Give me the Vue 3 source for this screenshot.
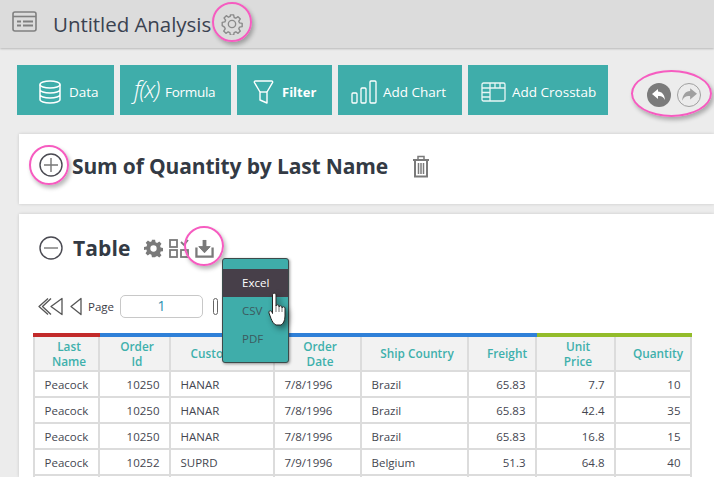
<script setup>
const buttons = [
  { label: 'Data', icon: 'data' },
  { label: 'Formula', icon: 'fx' },
  { label: 'Filter', icon: 'filter', bold: true },
  { label: 'Add Chart', icon: 'chart' },
  { label: 'Add Crosstab', icon: 'cross' }
]
const columns = [
  { label: ['Last', 'Name'], w: 65, color: '#c22a2a', cls: 'l', head: '' },
  { label: ['Order', 'Id'], w: 71, color: '#2f80d8', cls: 'r', head: '' },
  { label: ['CustomerID'], w: 104, color: '#2f80d8', cls: 'l', head: '' },
  { label: ['Order', 'Date'], w: 87, color: '#2f80d8', cls: 'l', head: '' },
  { label: ['Ship Country'], w: 107, color: '#2f80d8', cls: 'l', head: '' },
  { label: ['Freight'], w: 68, color: '#2f80d8', cls: 'r', head: 'wide' },
  { label: ['Unit', 'Price'], w: 79, color: '#93bc2a', cls: 'r', head: '' },
  { label: ['Quantity'], w: 76, color: '#93bc2a', cls: 'r', head: 'wide' }
]
const rows = [
  ['Peacock', '10250', 'HANAR', '7/8/1996', 'Brazil', '65.83', '7.7', '10'],
  ['Peacock', '10250', 'HANAR', '7/8/1996', 'Brazil', '65.83', '42.4', '35'],
  ['Peacock', '10250', 'HANAR', '7/8/1996', 'Brazil', '65.83', '16.8', '15'],
  ['Peacock', '10252', 'SUPRD', '7/9/1996', 'Belgium', '51.3', '64.8', '40'],
  ['', '', '', '', '', '', '', '']
]
</script>

<template>
  <div class="page">
    <header class="top">
      <svg class="logo" width="26" height="21" viewBox="0 0 26 21" fill="none" stroke="#808080" stroke-width="1.6">
        <rect x="1" y="1" width="23" height="19" rx="2" />
        <path d="M1 5.5h23" />
        <path d="M5 10.5h4M11 10.5h10M5 14.5h4M11 14.5h10" stroke-width="2" />
      </svg>
      <h1 class="name">Untitled Analysis</h1>
      <svg class="cog" width="22" height="22" viewBox="0 0 24 24" fill="none" stroke="#8a8a8a" stroke-width="1.5">
        <path d="M10.2 2h3.6l.5 2.9 1.9.8 2.4-1.7 2.5 2.5-1.7 2.4.8 1.900 2.900.5v3.600l-2.900.5-.8 1.900 1.700 2.400-2.500 2.500-2.400-1.700-1.900.8-.5 2.900h-3.600l-.5-2.900-1.900-.8-2.400 1.700-2.500-2.500 1.700-2.400-.8-1.900L1.300 13.800v-3.600l2.900-.5.8-1.900L3.300 5.400l2.500-2.500 2.400 1.700 1.900-.8z" stroke-linejoin="round" />
        <circle cx="12" cy="12" r="4" />
      </svg>
      <span class="ring ring-cog"></span>
    </header>

    <section class="tools">
      <button v-for="b in buttons" :key="b.label" class="tool" :class="'t-' + b.icon">
        <svg v-if="b.icon === 'data'" width="22" height="24" viewBox="0 0 22 24" fill="none" stroke="#fff" stroke-width="1.5">
          <ellipse cx="11" cy="4.500" rx="10" ry="3.500" />
          <path d="M1 4.500v15c0 2 4.500 3.500 10 3.500s10-1.500 10-3.500v-15M1 9.500c0 2 4.500 3.500 10 3.500s10-1.500 10-3.500M1 14.500c0 2 4.500 3.500 10 3.500s10-1.500 10-3.500" />
        </svg>
        <span v-else-if="b.icon === 'fx'" class="fx">f(x)</span>
        <svg v-else-if="b.icon === 'filter'" width="21" height="24" viewBox="0 0 21 24" fill="none" stroke="#fff" stroke-width="1.4">
          <path d="M2.500 1h16c1 0 1.500.8 1 1.700L14 12v11l-7-3v-8L1.500 2.700C1 1.800 1.500 1 2.500 1z" stroke-linejoin="round" />
          <path d="M7 12h7" />
        </svg>
        <svg v-else-if="b.icon === 'chart'" width="26" height="24" viewBox="0 0 26 24" fill="none" stroke="#fff" stroke-width="1.3">
          <rect x="1" y="13" width="5" height="10" rx="1" />
          <rect x="10" y="8" width="5" height="15" rx="1" />
          <rect x="19" y="1" width="6" height="22" rx="1" />
        </svg>
        <svg v-else width="25" height="20" viewBox="0 0 25 20" fill="none" stroke="#e8f6f5" stroke-width="1.3">
          <rect x="1" y="1" width="23" height="18" rx="1.500" />
          <path d="M1 6h23M9 1v18M14 1v5M19 1v5M1 10.500h8M1 15h8" />
        </svg>
        <span :class="{ strong: b.bold }">{{ b.label }}</span>
      </button>
      <div class="history">
        <span class="round solid">
          <svg width="14" height="12" viewBox="0 0 14 12" fill="#fff"><path d="M6 0 0 5l6 5V7c3-.4 5.500.5 7 4-.3-5-3-8.500-7-8.500z" /></svg>
        </span>
        <span class="round hollow">
          <svg width="16" height="14" viewBox="0 0 14 12" fill="#a0a0a0"><path d="m8 0 6 5-6 5V7C5 6.600 2.500 7.500 1 11c.3-5 3-8.500 7-8.500z" /></svg>
        </span>
        <span class="ring ring-history"></span>
      </div>
    </section>

    <section class="card summary">
      <span class="circle-btn"><svg width="24" height="24" viewBox="0 0 24 24" fill="none" stroke="#4a4a52" stroke-width="1.400"><circle cx="12" cy="12" r="11" /><path d="M12 5v14M5 12h14" stroke="#777" /></svg></span>
      <h2 class="title">Sum of Quantity by Last Name</h2>
      <svg class="trash" width="18" height="23" viewBox="0 0 18 23" fill="none" stroke="#7a7a7a" stroke-width="2">
        <path d="M1 5h16" />
        <path d="M6 4V1.500h6V4" stroke-width="1.500" />
        <path d="M3 6v15.500h12V6" />
        <path d="M6.500 8v11M9 8v11M11.500 8v11" stroke-width="1.500" />
      </svg>
      <span class="ring ring-plus"></span>
    </section>

    <section class="card detail">
      <div class="detail-head">
        <span class="circle-btn"><svg width="24" height="24" viewBox="0 0 24 24" fill="none" stroke="#4a4a52" stroke-width="1.400"><circle cx="12" cy="12" r="11" /><path d="M5 12h14" stroke="#777" /></svg></span>
        <h2 class="title table-title">Table</h2>
        <svg class="head-gear" width="19" height="19" viewBox="0 0 24 24" fill="#7a7a7a">
          <path fill-rule="evenodd" d="M10 1h4l.6 3.200 2 .8 2.700-1.800 2.800 2.800-1.800 2.700.8 2 3.200.6v4l-3.200.6-.8 2 1.800 2.700-2.800 2.800-2.700-1.800-2 .8L14 23h-4l-.6-3.200-2-.8-2.700 1.800-2.800-2.800 1.800-2.700-.8-2L0 14v-4l3.200-.6.8-2-1.800-2.700 2.800-2.800 2.700 1.800 2-.8zM12 8a4 4 0 1 0 0 8 4 4 0 0 0 0-8z" />
        </svg>
        <svg class="head-grid" width="20" height="19" viewBox="0 0 20 19" fill="none" stroke="#7a7a7a" stroke-width="1.800">
          <rect x="1" y="1" width="7" height="7" /><rect x="1" y="11" width="7" height="7" /><rect x="12" y="11" width="7" height="7" />
          <path d="m12 3 3 3 4-5" />
        </svg>
        <svg class="head-down" width="19" height="19" viewBox="0 0 20 20" fill="none" stroke="#7a7a7a">
          <path d="M1.500 9v9.500h17V9" stroke-width="2.400" />
          <path d="M10 1v8" stroke-width="4" />
          <path d="M4 8h12l-6 6.500z" fill="#7a7a7a" stroke-width="1" stroke-linejoin="round" />
        </svg>
        <span class="ring ring-down"></span>
      </div>

      <div class="pager">
        <svg width="25" height="19" viewBox="0 0 25 19" fill="none" stroke="#555" stroke-width="1.300" stroke-linejoin="round">
          <path d="M10 1.500 1 9.500l9 8" /><path d="M24 1.500 13 9.500l11 8z" />
          <path d="M13 1.500 4.500 9.500l8.500 8" />
        </svg>
        <svg class="prev" width="13" height="19" viewBox="0 0 13 19" fill="none" stroke="#555" stroke-width="1.300" stroke-linejoin="round">
          <path d="M12 1.500 2 9.500l10 8z" />
        </svg>
        <span class="page-label">Page</span>
        <span class="page-input">1</span>
        <span class="next-stub"></span>
      </div>

      <div class="table-wrap">
        <table class="grid">
          <colgroup><col v-for="c in columns" :key="c.label.join()" :style="{ width: c.w + 'px' }" /></colgroup>
          <thead>
            <tr>
              <th v-for="c in columns" :key="c.label.join()" :class="c.head" :style="{ borderTopColor: c.color }">
                <template v-for="(line, i) in c.label" :key="line"><br v-if="i" />{{ line }}</template>
              </th>
            </tr>
          </thead>
          <tbody>
            <tr v-for="(r, i) in rows" :key="i">
              <td v-for="(v, j) in r" :key="j" :class="columns[j].cls">{{ v }}</td>
            </tr>
          </tbody>
        </table>
      </div>

      <div class="menu">
        <div class="menu-item active">Excel</div>
        <div class="menu-item">CSV</div>
        <div class="menu-item">PDF</div>
        <svg class="hand" width="22" height="36" viewBox="0 0 22 36">
          <path d="M4.500 3c0-2.400 3.500-2.400 3.500 0v11c0-1.600 3-1.600 3 0v1c0-1.600 3-1.600 3 0v1c0-1.600 3-1.600 3 0v8c0 5-2 8-4 9H8c-2.500-1-4-4-5-6.500L1 21c-.8-2 1.800-3.200 3-1l.5 1.500z" fill="#fff" stroke="#222" stroke-width="1" stroke-linejoin="round" />
          <path d="M8 14v6M11 15v5M14 16v4" stroke="#555" stroke-width=".8" fill="none" />
        </svg>
      </div>
    </section>
  </div>
</template>

<style scoped>
.page {
  width: 714px;
  height: 477px;
  overflow: hidden;
  background: #ececec;
  font-family: "Open Sans", "Noto Sans", sans-serif;
  color: #3c3c46;
  position: relative;
}
.top {
  height: 48px;
  background: #dcdcdc;
  box-shadow: 0 1px 2px rgba(0, 0, 0, .22);
  display: flex;
  align-items: center;
  position: relative;
}
.logo { margin-left: 12px; margin-top: -5px; }
.name {
  margin: -1px 0 0 15px;
  font-size: 20.500px;
  font-weight: 400;
  letter-spacing: -.05px;
  color: #3a4250;
}
.cog { margin-left: 10px; margin-top: -1px; }
.ring {
  position: absolute;
  border: 2px solid #f65cc0;
  border-radius: 50%;
  box-shadow: 2px 3px 4px rgba(0, 0, 0, .28);
  box-sizing: border-box;
  pointer-events: none;
}
.ring-cog { left: 212px; top: 2px; width: 40px; height: 40px; }
.tools {
  display: flex;
  gap: 6px;
  padding: 17px 0 0 17px;
  height: 50px;
}
.tool {
  height: 50px;
  box-sizing: border-box;
  border: 0;
  padding: 3px 0 0;
  background: #3fadaa;
  color: #fff;
  font: 400 13.500px "Open Sans", sans-serif;
  display: flex;
  align-items: center;
  gap: 8px;
}
.t-data { width: 97px; padding-left: 22px; }
.t-fx { width: 111px; padding-left: 14px; letter-spacing: -.3px; }
.t-filter { width: 95px; padding-left: 16px; }
.t-chart { width: 124px; padding-left: 13px; gap: 6px; }
.t-cross { width: 140px; padding-left: 13px; gap: 6px; }
.fx {
  width: 23px;
  margin-top: -5px;
  font: italic 300 23px "Open Sans", sans-serif;
  letter-spacing: -1px;
  white-space: nowrap;
}
.strong { font-weight: 700; font-size: 13px; }
.history {
  position: relative;
  display: flex;
  align-items: center;
  gap: 6px;
  margin-left: 33px;
  height: 60px;
}
.round {
  width: 24px;
  height: 24px;
  border-radius: 50%;
  display: flex;
  align-items: center;
  justify-content: center;
  box-sizing: border-box;
}
.solid { background: #7b7b7b; }
.hollow { border: 1.500px solid #a0a0a0; }
.ring-history { left: -16px; top: 5px; width: 81px; height: 47px; }
.card {
  background: #fff;
  margin-left: 19px;
  box-shadow: 0 0 3px rgba(0, 0, 0, .16);
  position: relative;
}
.summary {
  margin-top: 19px;
  height: 70px;
  display: flex;
  align-items: center;
}
.circle-btn { display: flex; }
.summary .circle-btn { margin-left: 20px; margin-top: -8px; }
.title {
  margin: 0;
  font-size: 21px;
  font-weight: 700;
  color: #333a44;
  letter-spacing: -.15px;
}
.summary .title { margin-left: 9px; margin-top: -6px; width: 340px; white-space: nowrap; }
.trash { margin-top: -6px; }
.ring-plus { left: 10px; top: 11px; width: 40px; height: 40px; }
.detail {
  margin-top: 10px;
  height: 263px;
}
.detail-head {
  display: flex;
  align-items: center;
  height: 68px;
  padding-left: 20px;
  position: relative;
}
.table-title { margin-left: 10px; margin-right: 14px; letter-spacing: .1px; }
.head-gear { margin-right: 6px; }
.head-grid { margin-right: 6px; }
.ring-down { left: 165px; top: 12px; width: 40px; height: 40px; }
.pager {
  display: flex;
  align-items: center;
  height: 23px;
  margin-top: 13px;
  padding-left: 19px;
}
.prev { margin-left: 6px; }
.page-label {
  font-size: 11.500px;
  margin-left: 6px;
  width: 32px;
}
.page-input {
  width: 83px;
  height: 23px;
  box-sizing: border-box;
  border: 1px solid #c8c8c8;
  border-radius: 5px;
  text-align: center;
  color: #2a8fb0;
  font-size: 14px;
  line-height: 19px;
}
.next-stub {
  width: 5px;
  height: 17px;
  box-sizing: border-box;
  border: 1.500px solid #666;
  border-radius: 3px;
  margin-left: 10px;
}
.table-wrap { margin: 15px 0 0 14px; width: 657px; }
.grid {
  border-collapse: collapse;
  table-layout: fixed;
  width: 657px;
  font-size: 11.500px;
  color: #444650;
}
th {
  border: 2px solid #dcdcdc;
  border-top: 4px solid;
  height: 33px;
  padding: 0 0 0 5px;
  background: #f2f2f2;
  color: #3eb0ac;
  font-size: 11.800px;
  line-height: 15px;
  font-weight: 600;
}
th.wide { padding-left: 10px; }
td {
  border: 2px solid #dcdcdc;
  height: 26px;
  padding: 0 9.500px;
  white-space: nowrap;
  box-sizing: border-box;
}
td.r { text-align: right; }
.menu {
  position: absolute;
  left: 203px;
  top: 44px;
  width: 67px;
  height: 105px;
  box-sizing: border-box;
  padding-top: 10px;
  background: #3fadaa;
  border: 1px solid #3c4a4a;
  border-radius: 3px;
  box-shadow: 1px 1px 3px rgba(0, 0, 0, .4);
  font-size: 11.500px;
  color: #3c5a5e;
}
.menu-item {
  height: 28px;
  line-height: 28px;
  padding-left: 19px;
}
.active { background: #473f49; color: #fff; }
.hand {
  position: absolute;
  left: 45px;
  top: 33px;
  filter: drop-shadow(3px 3px 3px rgba(0, 0, 0, .45));
}
</style>
<style>
html, body { background: #fff; }
</style>
